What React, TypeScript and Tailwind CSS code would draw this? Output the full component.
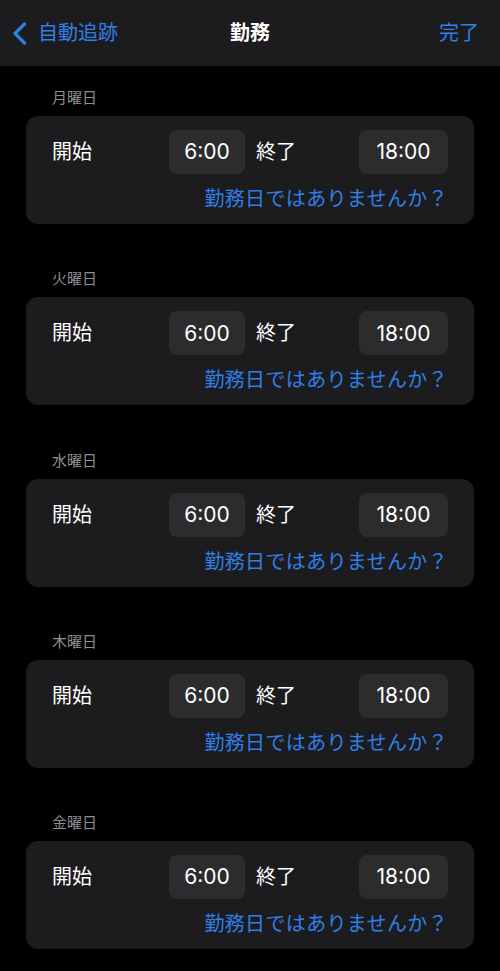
import React from 'react';

const days = ['月曜日', '火曜日', '水曜日', '木曜日', '金曜日'];

const font = { fontFamily: 'Inter, "Noto Sans CJK JP", sans-serif' };

function DayCard({ day }: { day: string }) {
  return (
    <section className="flex flex-col">
      <h3 className="pl-[52px] text-[15px] leading-[20px] text-[#8d8d92]">{day}</h3>
      <div className="mx-[26px] mt-2 flex h-[108px] flex-col rounded-[12px] bg-[#1c1c1e] pl-[26px] pr-[26px] pt-[14px]">
        <div className="flex h-[44px] items-center">
          <span className="w-[117px] text-[20px] text-white">開始</span>
          <div className="flex h-[44px] w-[76px] items-center justify-center rounded-[8px] bg-[#2c2c2e] text-[21px] text-white">
            6:00
          </div>
          <span className="ml-[11px] flex-1 text-[20px] text-white">終了</span>
          <div className="flex h-[44px] w-[89px] items-center justify-center rounded-[8px] bg-[#2c2c2e] text-[21px] text-white">
            18:00
          </div>
        </div>
        <div className="mt-[13px] text-right text-[20px] leading-[24px] tracking-[0.35px] text-[#2f7fe6]">
          勤務日ではありませんか？
        </div>
      </div>
    </section>
  );
}

export default function App() {
  return (
    <div className="min-h-[971px] w-[500px] bg-black" style={font}>
      {/* Nav bar */}
      <header className="grid h-[66px] grid-cols-[1fr_auto_1fr] items-center bg-[#1c1c1e]">
        <div className="flex items-center pl-[12px] text-[#2f7fe6]">
          <svg width="15" height="23" viewBox="0 0 15 23" fill="none">
            <polyline points="12.5,2 3,11.5 12.5,21" stroke="currentColor" strokeWidth="3.2" strokeLinecap="round" strokeLinejoin="round" />
          </svg>
          <span className="ml-[11px] text-[20px]">自動追跡</span>
        </div>
        <h1 className="text-[20px] font-bold text-white">勤務</h1>
        <div className="pr-[21px] text-right text-[20px] text-[#2f7fe6]">完了</div>
      </header>

      <main className="flex flex-col gap-[45.25px] pt-[22px]">
        {days.map((d) => (
          <DayCard key={d} day={d} />
        ))}
      </main>
    </div>
  );
}
